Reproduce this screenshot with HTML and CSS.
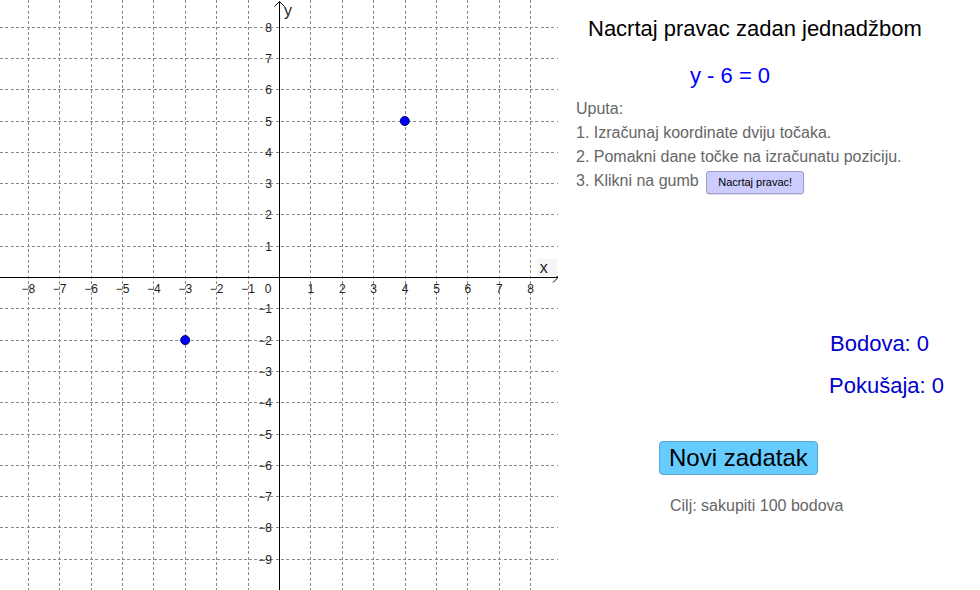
FILE: index.html
```html
<!DOCTYPE html>
<html lang="hr">
<head>
<meta charset="utf-8">
<title>Nacrtaj pravac</title>
<link rel="stylesheet" href="styles.css">
</head>
<body>
<div class="app">
  <svg class="graph" width="558" height="590" viewBox="0 0 558 590" xmlns="http://www.w3.org/2000/svg">
    <g class="grid">
      <line x1="28.3" y1="0" x2="28.3" y2="590"/>
      <line x1="59.7" y1="0" x2="59.7" y2="590"/>
      <line x1="91.1" y1="0" x2="91.1" y2="590"/>
      <line x1="122.5" y1="0" x2="122.5" y2="590"/>
      <line x1="153.9" y1="0" x2="153.9" y2="590"/>
      <line x1="185.3" y1="0" x2="185.3" y2="590"/>
      <line x1="216.7" y1="0" x2="216.7" y2="590"/>
      <line x1="248.1" y1="0" x2="248.1" y2="590"/>
      <line x1="310.9" y1="0" x2="310.9" y2="590"/>
      <line x1="342.3" y1="0" x2="342.3" y2="590"/>
      <line x1="373.7" y1="0" x2="373.7" y2="590"/>
      <line x1="405.1" y1="0" x2="405.1" y2="590"/>
      <line x1="436.5" y1="0" x2="436.5" y2="590"/>
      <line x1="467.9" y1="0" x2="467.9" y2="590"/>
      <line x1="499.3" y1="0" x2="499.3" y2="590"/>
      <line x1="530.7" y1="0" x2="530.7" y2="590"/>

      <line x1="0" y1="27.1" x2="558" y2="27.1"/>
      <line x1="0" y1="58.4" x2="558" y2="58.4"/>
      <line x1="0" y1="89.7" x2="558" y2="89.7"/>
      <line x1="0" y1="121.0" x2="558" y2="121.0"/>
      <line x1="0" y1="152.3" x2="558" y2="152.3"/>
      <line x1="0" y1="183.6" x2="558" y2="183.6"/>
      <line x1="0" y1="214.9" x2="558" y2="214.9"/>
      <line x1="0" y1="246.2" x2="558" y2="246.2"/>
      <line x1="0" y1="308.8" x2="558" y2="308.8"/>
      <line x1="0" y1="340.1" x2="558" y2="340.1"/>
      <line x1="0" y1="371.4" x2="558" y2="371.4"/>
      <line x1="0" y1="402.7" x2="558" y2="402.7"/>
      <line x1="0" y1="434.0" x2="558" y2="434.0"/>
      <line x1="0" y1="465.3" x2="558" y2="465.3"/>
      <line x1="0" y1="496.6" x2="558" y2="496.6"/>
      <line x1="0" y1="527.9" x2="558" y2="527.9"/>
      <line x1="0" y1="559.2" x2="558" y2="559.2"/>
    </g>

    <g class="axes">
      <line x1="0" y1="277.5" x2="558" y2="277.5"/>
      <line x1="279.5" y1="1.5" x2="279.5" y2="590"/>
      <polyline points="553,272.5 558,277.5 553,282.5"/>
      <polyline points="274.5,6.5 279.5,1.5 284.5,6.5"/>
    </g>

    <rect class="label-bg" x="537" y="259" width="20" height="17"/>
    <text class="axis-name" x="539.7" y="272.5">x</text>
    <text class="axis-name" x="284" y="15.5">y</text>

    <g class="xlabels">
      <text x="28.3" y="293">−8</text>
      <text x="59.7" y="293">−7</text>
      <text x="91.1" y="293">−6</text>
      <text x="122.5" y="293">−5</text>
      <text x="153.9" y="293">−4</text>
      <text x="185.3" y="293">−3</text>
      <text x="216.7" y="293">−2</text>
      <text x="248.1" y="293">−1</text>
      <text x="268" y="293">0</text>
      <text x="310.9" y="293">1</text>
      <text x="342.3" y="293">2</text>
      <text x="373.7" y="293">3</text>
      <text x="405.1" y="293">4</text>
      <text x="436.5" y="293">5</text>
      <text x="467.9" y="293">6</text>
      <text x="499.3" y="293">7</text>
      <text x="530.7" y="293">8</text>
    </g>

    <g class="ylabels">
      <text x="272" y="31.6">8</text>
      <text x="272" y="62.9">7</text>
      <text x="272" y="94.2">6</text>
      <text x="272" y="125.5">5</text>
      <text x="272" y="156.8">4</text>
      <text x="272" y="188.1">3</text>
      <text x="272" y="219.4">2</text>
      <text x="272" y="250.7">1</text>
      <text x="272" y="313.3">−1</text>
      <text x="272" y="344.6">−2</text>
      <text x="272" y="375.9">−3</text>
      <text x="272" y="407.2">−4</text>
      <text x="272" y="438.5">−5</text>
      <text x="272" y="469.8">−6</text>
      <text x="272" y="501.1">−7</text>
      <text x="272" y="532.4">−8</text>
      <text x="272" y="563.7">−9</text>
    </g>

    <circle class="point" cx="404.8" cy="121" r="4.5"/>
    <circle class="point" cx="185.2" cy="340.1" r="4.5"/>
  </svg>

  <div class="panel">
    <div class="title">Nacrtaj pravac zadan jednadžbom</div>
    <div class="equation">y - 6 = 0</div>
    <div class="instructions">
      <div class="line">Uputa:</div>
      <div class="line">1. Izračunaj koordinate dviju točaka.</div>
      <div class="line">2. Pomakni dane točke na izračunatu poziciju.</div>
      <div class="line">3. Klikni na gumb <button class="btn-draw" type="button">Nacrtaj pravac!</button></div>
    </div>
    <div class="score score-points">Bodova: 0</div>
    <div class="score score-tries">Pokušaja: 0</div>
    <div class="new-wrap"><button class="btn-new" type="button">Novi zadatak</button></div>
    <div class="goal">Cilj: sakupiti 100 bodova</div>
  </div>
</div>
</body>
</html>
```

FILE: styles.css
```css
html, body {
  margin: 0;
  padding: 0;
  background: #ffffff;
}

body {
  font-family: "Liberation Sans", Arial, sans-serif;
  width: 980px;
  height: 590px;
  overflow: hidden;
}

.app {
  display: flex;
  width: 980px;
  height: 590px;
}

.graph {
  display: block;
  flex: 0 0 558px;
}

.grid line {
  stroke: #8a8a8a;
  stroke-width: 1;
  stroke-dasharray: 3 2.3;
  shape-rendering: crispEdges;
}

.axes line {
  stroke: #000000;
  stroke-width: 1.2;
  shape-rendering: crispEdges;
}

.axes polyline {
  fill: none;
  stroke: #000000;
  stroke-width: 1;
}

.label-bg {
  fill: #f5f5f5;
}

.axis-name {
  font-family: "Liberation Sans", Arial, sans-serif;
  font-size: 16px;
  fill: #222222;
}

.xlabels text,
.ylabels text {
  font-family: "Liberation Sans", Arial, sans-serif;
  font-size: 12px;
  fill: #222222;
}

.xlabels text {
  text-anchor: middle;
}

.ylabels text {
  text-anchor: end;
}

.point {
  fill: #0000ff;
  stroke: #000066;
  stroke-width: 1;
}

.panel {
  flex: 1 1 auto;
  display: flex;
  flex-direction: column;
  align-items: flex-start;
}

.title {
  margin: 16px 0 0 30px;
  font-size: 22px;
  line-height: 26px;
  color: #000000;
  white-space: nowrap;
}

.equation {
  margin: 21px 0 0 132px;
  font-size: 22px;
  line-height: 26px;
  color: #0000ff;
  white-space: nowrap;
}

.instructions {
  margin: 8px 0 0 18px;
  font-size: 16px;
  line-height: 24px;
  color: #666666;
}

.line {
  white-space: nowrap;
}

.btn-draw {
  font-family: "Liberation Sans", Arial, sans-serif;
  font-size: 11px;
  line-height: 13px;
  padding: 4px 11px;
  margin: 0 0 0 3px;
  border: 1px solid #9d9dc9;
  border-radius: 3px;
  background: #ccccff;
  color: #000000;
  box-shadow: 0 1px 1px rgba(0, 0, 0, 0.12);
}

.score {
  font-size: 22px;
  line-height: 26px;
  color: #0000cc;
  white-space: nowrap;
}

.score-points {
  margin: 137px 0 0 272px;
}

.score-tries {
  margin: 16px 0 0 271px;
}

.new-wrap {
  margin: 42px 0 0 101px;
}

.btn-new {
  display: block;
  font-family: "Liberation Sans", Arial, sans-serif;
  font-size: 24px;
  line-height: 28px;
  padding: 2px 9px;
  margin: 0;
  border: 1px solid #5aa6d6;
  border-radius: 4px;
  background: #66ccff;
  color: #000000;
}

.goal {
  margin: 19px 0 0 112px;
  font-size: 16px;
  line-height: 24px;
  color: #666666;
  white-space: nowrap;
}
```
